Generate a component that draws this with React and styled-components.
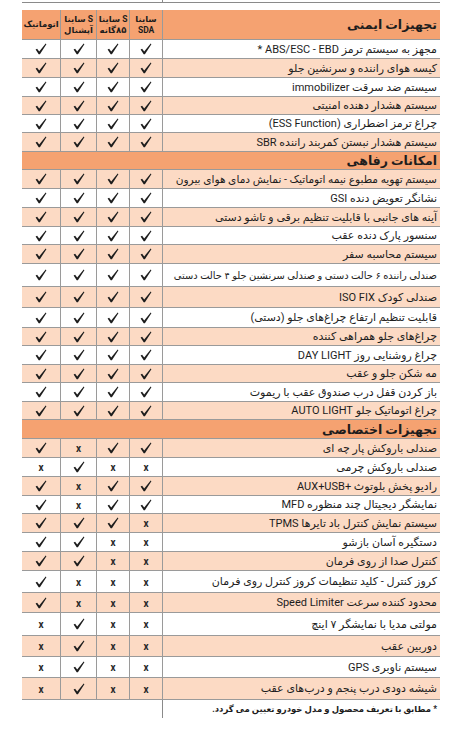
import React from "react";
import styled, { createGlobalStyle } from "styled-components";

const GlobalStyle = createGlobalStyle`
  body { margin: 0; background: #fff; }
  * { box-sizing: border-box; }
`;

const COLS = "278px 33px 33px 36px 38px";
const LINE = "#9a9a9a";
const ORANGE = "#f5a271";
const PEACH = "#fcdac4";

// marks are in RTL order: SDA, ۸۵گانه, آپشنال, اتوماتیک
const ALL = [1, 1, 1, 1];

const SECTIONS = [
  {
    title: "تجهیزات ایمنی",
    head: 30,
    rows: [
      ["مجهز به سیستم ترمز  ABS/ESC - EBD *", ALL, 19],
      ["کیسه هوای راننده و سرنشین جلو", ALL, 19],
      ["سیستم ضد سرقت immobilizer", ALL, 19],
      ["سیستم هشدار دهنده امنیتی", ALL, 18],
      ["چراغ ترمز اضطراری (ESS Function)", ALL, 18],
      ["سیستم هشدار نبستن کمربند راننده SBR", ALL, 19],
    ],
  },
  {
    title: "امکانات رفاهی",
    head: 18,
    rows: [
      ["سیستم تهویه مطبوع نیمه اتوماتیک - نمایش دمای هوای بیرون", ALL, 19, 10.6],
      ["نشانگر تعویض دنده GSI", ALL, 19],
      ["آینه های جانبی با قابلیت تنظیم برقی و تاشو دستی", ALL, 19],
      ["سنسور پارک دنده عقب", ALL, 18],
      ["سیستم محاسبه سفر", ALL, 19],
      ["صندلی راننده ۶ حالت دستی و صندلی سرنشین جلو ۴ حالت دستی", ALL, 23, 9.9],
      ["صندلی کودک ISO FIX", ALL, 21],
      ["قابلیت تنظیم ارتفاع چراغ‌های جلو (دستی)", ALL, 20],
      ["چراغ‌های جلو همراهی کننده", ALL, 18],
      ["چراغ روشنایی روز  DAY LIGHT", ALL, 19],
      ["مه شکن جلو و عقب", ALL, 18],
      ["باز کردن قفل درب صندوق عقب با ریموت", ALL, 19],
      ["چراغ اتوماتیک جلو  AUTO LIGHT", ALL, 18],
    ],
  },
  {
    title: "تجهیزات اختصاصی",
    head: 19,
    rows: [
      ["صندلی باروکش پار چه ای", [1, 1, 0, 1], 19],
      ["صندلی باروکش چرمی", [0, 0, 1, 0], 19],
      ["رادیو پخش بلوتوث +AUX+USB", [1, 1, 0, 1], 19],
      ["نمایشگر دیجیتال چند منظوره MFD", [1, 1, 0, 1], 18],
      ["سیستم نمایش کنترل باد تایرها  TPMS", [0, 1, 1, 1], 19],
      ["دستگیره آسان بازشو", [0, 0, 1, 1], 19],
      ["کنترل صدا از روی فرمان", [0, 0, 1, 1], 19],
      ["کروز کنترل - کلید تنظیمات کروز کنترل روی فرمان", [0, 0, 0, 1], 22],
      ["محدود کننده سرعت Speed Limiter", [0, 0, 0, 1], 20],
      ["مولتی مدیا با نمایشگر ۷ اینچ", [0, 0, 1, 0], 23],
      ["دوربین عقب", [0, 0, 1, 0], 21],
      ["سیستم ناوبری GPS", [0, 0, 1, 0], 21],
      ["شیشه دودی درب پنجم و درب‌های عقب", [0, 0, 1, 0], 22],
    ],
  },
];

const MODELS = [
  ["ساینا", "SDA"],
  ["S ساینا", "۸۵گانه"],
  ["S ساینا", "آپشنال"],
  ["اتوماتیک"],
];

const Sheet = styled.div`
  width: 418px;
  margin-left: 22px;
  direction: rtl;
  font-family: Roboto, "DejaVu Sans", sans-serif;
  color: #1d1d1d;
`;

const TopRule = styled.div`
  display: grid;
  grid-template-columns: ${COLS};
  height: 3px;
  border-bottom: 1px solid #8a8a8a;
  margin-bottom: 7px;

  & > span:first-child {
    border-left: 1px solid #8a8a8a;
  }
`;

const Row = styled.div`
  display: grid;
  grid-template-columns: ${COLS};
  height: ${(p) => p.$h}px;
  background: ${(p) =>
    p.$tone === "orange" ? ORANGE : p.$tone === "peach" ? PEACH : "#fff"};
  border-bottom: 1px solid ${LINE};
`;

const Desc = styled.div`
  display: flex;
  align-items: center;
  padding-right: 3px;
  font-size: ${(p) => p.$size || 11}px;
  white-space: nowrap;
  overflow: hidden;
  border-left: 1px solid ${LINE};
`;

const SectionTitle = styled.div`
  display: flex;
  align-items: center;
  padding-right: 3px;
  font-size: 12.5px;
  font-weight: 700;
  white-space: nowrap;
  grid-column: ${(p) => (p.$wide ? "1 / -1" : "auto")};
  border-left: ${(p) => (p.$wide ? "none" : `1px solid ${LINE}`)};
`;

const MarkCell = styled.div`
  display: flex;
  align-items: center;
  justify-content: center;
  border-left: 1px solid ${LINE};

  &:last-child {
    border-left: none;
  }
`;

const ModelHead = styled(MarkCell)`
  flex-direction: column;
  font-size: 8.5px;
  font-weight: 700;
  line-height: 11px;
  text-align: center;
  white-space: nowrap;
  letter-spacing: -0.2px;
`;

const Cross = styled.span`
  font-family: Roboto, sans-serif;
  font-size: 10px;
  font-weight: 700;
  line-height: 1;
  color: #2a2a2a;
  margin-top: 2px;
`;

const Footer = styled.div`
  display: grid;
  grid-template-columns: ${COLS};
  height: 18px;
`;

const Note = styled.div`
  border-left: 1px solid #8a8a8a;
  padding: 4px 3px 0 0;
  font-size: 8.5px;
  font-weight: 700;
  white-space: nowrap;
`;

const Check = () => (
  <svg width="12" height="12" viewBox="0 0 12 12">
    <path
      d="M0.6 6.5 L2.1 5.7 L4.2 8.4 L10.7 0.6 L11.4 1.2 L4.9 11.2 L3.7 11.2 Z"
      fill="#1d1d1d"
    />
  </svg>
);

const Marks = ({ marks }) =>
  marks.map((m, i) => (
    <MarkCell key={i}>{m ? <Check /> : <Cross>x</Cross>}</MarkCell>
  ));

const App = () => {
  return (
    <>
      <GlobalStyle />
      <Sheet>
        <TopRule>
          <span />
        </TopRule>

        {SECTIONS.map((sec, si) => (
          <React.Fragment key={sec.title}>
            {si === 0 ? (
              <Row $h={sec.head} $tone="orange">
                <SectionTitle>{sec.title}</SectionTitle>
                {MODELS.map((m, i) => (
                  <ModelHead key={i}>
                    {m.map((line) => (
                      <span key={line}>{line}</span>
                    ))}
                  </ModelHead>
                ))}
              </Row>
            ) : (
              <Row $h={sec.head} $tone="orange">
                <SectionTitle $wide>{sec.title}</SectionTitle>
              </Row>
            )}
            {sec.rows.map(([text, marks, h, size], ri) => {
              const peach = si === 0 ? ri % 2 === 1 : ri % 2 === 0;
              return (
                <Row key={text} $h={h} $tone={peach ? "peach" : "white"}>
                  <Desc $size={size}>{text}</Desc>
                  <Marks marks={marks} />
                </Row>
              );
            })}
          </React.Fragment>
        ))}

        <Footer>
          <Note>* مطابق با تعریف محصول و مدل خودرو تعیین می گردد.</Note>
        </Footer>
      </Sheet>
    </>
  );
};

export default App;
